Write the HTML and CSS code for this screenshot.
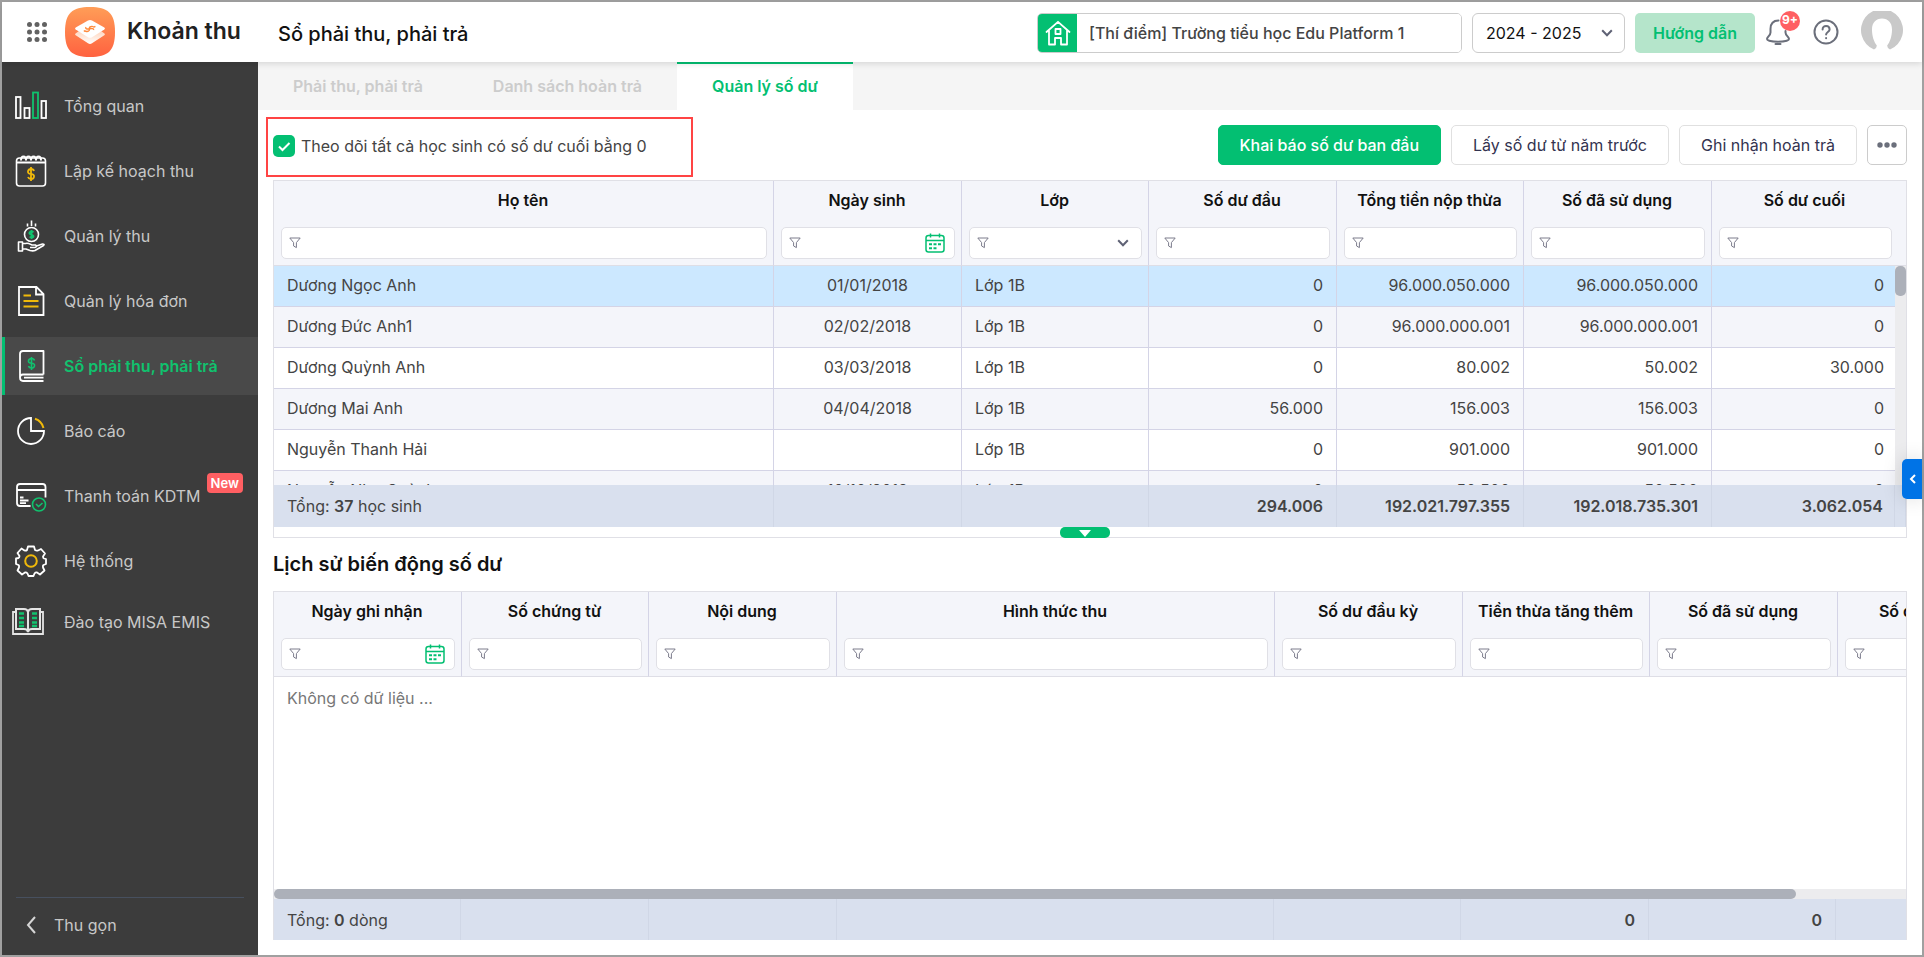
FILE: index.html
```html
<!DOCTYPE html>
<html lang="vi">
<head>
    <meta charset="UTF-8">
    <meta name="viewport" content="width=device-width, initial-scale=1.0">
    <title>Khoản thu - Sổ phải thu, phải trả</title>
    <link rel="stylesheet" href="styles.css">
</head>
<body>

<!-- Shared icons -->
<svg class="icon-defs" width="0" height="0" aria-hidden="true">
    <symbol id="icon-filter" viewBox="0 0 12 12">
        <path d="M.8 1h10.4L7.4 5.6v5L4.6 9V5.6z" fill="none" stroke="#7c7c8c" stroke-linejoin="round"/>
    </symbol>
    <symbol id="icon-calendar" viewBox="0 0 20 20">
        <g fill="none" stroke="#03bf72" stroke-width="1.5">
            <rect x="1" y="2.5" width="18" height="16.5" rx="2.5"/>
            <path d="M1 7.5h18M5.5 .5v4M14.5 .5v4"/>
            <path d="M4 11.2h3M8.5 11.2h3M13 11.2h3M4 15.2h3M8.5 15.2h3" stroke-width="2"/>
        </g>
    </symbol>
    <symbol id="icon-down" viewBox="0 0 12 8">
        <path d="M1.2 1.2 6 6.2l4.8-5" fill="none" stroke="#5f6275" stroke-width="2"/>
    </symbol>
</svg>

<div class="page">
    <!-- Header -->
    <header class="header">
        <div class="brand">
            <button class="icon-button apps" aria-label="Ứng dụng">
                <svg width="20" height="20" viewBox="0 0 20 20" fill="#626262">
                    <circle cx="2.5" cy="2.5" r="2.5"/><circle cx="10" cy="2.5" r="2.5"/><circle cx="17.5" cy="2.5" r="2.5"/>
                    <circle cx="2.5" cy="10" r="2.5"/><circle cx="10" cy="10" r="2.5"/><circle cx="17.5" cy="10" r="2.5"/>
                    <circle cx="2.5" cy="17.5" r="2.5"/><circle cx="10" cy="17.5" r="2.5"/><circle cx="17.5" cy="17.5" r="2.5"/>
                </svg>
            </button>
            <svg class="logo" width="50" height="50" viewBox="0 0 50 50">
                <defs>
                    <linearGradient id="logo-bg" x1="0" y1="0" x2="0" y2="1">
                        <stop offset="0" stop-color="#ff9d57"/><stop offset="1" stop-color="#ff6240"/>
                    </linearGradient>
                    <linearGradient id="logo-base" x1="0" y1="0" x2="0" y2="1">
                        <stop offset="0" stop-color="#ffd5bd"/><stop offset="1" stop-color="#fff"/>
                    </linearGradient>
                </defs>
                <path d="M25 0C43 0 50 6 50 25S43 50 25 50 0 44 0 25 7 0 25 0z" fill="url(#logo-bg)"/>
                <path d="M10.500 26.500 14 24l11 5 11-5 3.500 2.500q1 1-.2 1.800L27 36.300q-2 1.200-4 0L10.700 28.300q-1.200-.8-.2-1.800z" fill="url(#logo-base)"/>
                <path d="M23 13.600q2-1 4 0l12.300 7q1.400 1 0 2L27 30.200q-2 1.200-4 0L10.700 22.600q-1.400-1 0-2z" fill="#fff"/>
                <path d="M20 23.800c1 1.300 3.300.8 4.200-.5.700-1.200-.4-2.200.6-3.200 1.200-1 3.600-1 4.200.4M21 20.200c-.8 1.500 1 2.200 3.300 1.600 2.600-.7 4.800-.3 4.200 1.200M18.800 24.400l1.400-.7M29 20.200l1.400-.8" fill="none" stroke="#ff8a3c" stroke-width="1.400"/>
            </svg>
            <span class="app-name">Khoản thu</span>
        </div>
        <h1>Sổ phải thu, phải trả</h1>

        <div class="school">
            <span class="school-icon">
                <svg width="26" height="26" viewBox="0 0 26 26" fill="none" stroke="#fff" stroke-width="1.800" stroke-linejoin="round" stroke-linecap="round">
                    <path d="M1.500 12 13 1.800 24.500 12M4 10.500V24.500h6V18h6v6.500h6V10.500"/>
                    <rect x="10.500" y="9" width="5" height="5"/>
                </svg>
            </span>
            <input type="text" aria-label="Trường" value="[Thí điểm] Trường tiểu học Edu Platform 1">
        </div>
        <div class="year">
            <select aria-label="Năm học"><option>2024 - 2025</option></select>
            <svg width="12" height="8"><use href="#icon-down"/></svg>
        </div>
        <button class="guide">Hướng dẫn</button>
        <button class="icon-button bell" aria-label="Thông báo">
            <svg width="24" height="28" viewBox="0 0 24 28" fill="none" stroke="#6b6f7b" stroke-width="2" stroke-linecap="round" stroke-linejoin="round">
                <path d="M12.500 2.500C7 2.500 4.500 6 4.500 11v3.500c0 3-3.500 4.500-3.500 6.500 0 3.500 22 3.500 22 0 0-2-3.500-3.500-3.500-6.500V13"/>
                <path d="M9.500 26h5"/>
            </svg>
            <span class="count">9+</span>
        </button>
        <button class="icon-button help" aria-label="Trợ giúp">
            <svg width="26" height="26" viewBox="0 0 26 26" fill="none" stroke="#6b6f7b" stroke-width="2" stroke-linecap="round">
                <circle cx="13" cy="13" r="11.500"/>
                <path d="M9.600 10.400c0-4.600 7-4.400 7 0 0 2.600-3.500 2.600-3.500 5.200M13.100 19v.3"/>
            </svg>
        </button>
        <button class="icon-button" aria-label="Tài khoản">
            <svg width="42" height="42" viewBox="0 0 42 42">
                <path d="M13 38.500A21 21 0 1 1 29 38.500Q26 37 26.200 34.500C29 31 31 25 31 18.500 31 11.500 27 7.500 21 7.500S11 11.500 11 18.500c0 6.500 2 12.500 4.800 16Q16 37 13 38.500z" fill="#c9c9c9"/>
            </svg>
        </button>
    </header>

    <div class="layout">
        <!-- Sidebar -->
        <nav class="sidebar">
            <ul class="menu">
                <li><a href="#">
                    <svg width="32" height="32" viewBox="0 0 32 32" fill="none" stroke="#fff" stroke-width="1.800">
                        <rect x="1" y="7" width="4.500" height="21"/><rect x="9.500" y="18" width="5" height="10"/>
                        <rect x="18" y="2.500" width="5" height="25.500" stroke="#10c26e"/><rect x="26.500" y="11" width="4.500" height="17"/>
                    </svg>
                    <span>Tổng quan</span></a></li>
                <li><a href="#">
                    <svg width="32" height="32" viewBox="0 0 32 32" fill="none" stroke="#fff" stroke-width="1.600">
                        <rect x="1.500" y="3" width="29" height="28" rx="3"/>
                        <path d="M1.500 7.500h29" stroke-width="2"/>
                        <path d="M6 5.500q0-4 2.500-4T11 5.500q0-4 2.500-4t2.500 4q0-4 2.500-4t2.500 4q0-4 2.500-4t2.500 4" stroke-width="2"/>
                        <path d="M19 16q-.5-2-3-2t-3 2.300 3 2.700 3 2.800-3 2.200-3-2M16 12v14" stroke="#f0b90a" stroke-width="1.800"/>
                    </svg>
                    <span>Lập kế hoạch thu</span></a></li>
                <li><a href="#">
                    <svg width="32" height="32" viewBox="0 0 32 32" fill="none" stroke="#fff" stroke-width="1.600" stroke-linejoin="round">
                        <circle cx="16.500" cy="14.500" r="7"/>
                        <path d="M12.500 3.500v3M16.500 .5v5.500M20.500 3.500v3M3.500 22h4v9h-4zM7.500 23.500h3c3-1 5 1 6.500 1.500h3.500q2 1.500-.5 2.500h-5M21.500 26l6-2q2.500 0 1 1.500L20 30.500q-2 .8-5 0L11 29H7.500"/>
                        <path d="M18.500 12.300q-2-1.600-3.500-.3t.5 2.300q3 .6 3 2.200t-4 .5M16.500 10v9" stroke="#10c26e" stroke-width="1.800"/>
                    </svg>
                    <span>Quản lý thu</span></a></li>
                <li><a href="#">
                    <svg width="32" height="32" viewBox="0 0 32 32" fill="none" stroke="#fff" stroke-width="1.800">
                        <path d="M4 2h17.500L28.500 9v21H4zM21 2v7.500h7.500"/>
                        <path d="M8.500 10.500h7.500M8.500 16h15M8.500 21.500h15" stroke="#f0b90a" stroke-width="2"/>
                    </svg>
                    <span>Quản lý hóa đơn</span></a></li>
                <li><a href="#" class="active">
                    <svg width="32" height="32" viewBox="0 0 32 32" fill="none" stroke="#fff" stroke-width="1.800" stroke-linejoin="round">
                        <path d="M28.500 24.500V1H8Q5 1 5 4v23.500Q5 31 8 31h20.500M28.500 24.500H8q-3 0-3 3M9 27.700h19.500"/>
                        <path d="M19.500 10.500q-.5-2-3-2t-3 2.200 3 2.500 3 2.600-3 2.200-3-2M16.500 7v13" stroke="#10c26e" stroke-width="1.600"/>
                    </svg>
                    <span>Sổ phải thu, phải trả</span></a></li>
                <li><a href="#">
                    <svg width="32" height="32" viewBox="0 0 32 32" fill="none" stroke="#fff" stroke-width="1.800">
                        <path d="M16 3A13 13 0 1 0 29 16H16z"/>
                        <path d="M20 3.800A13 13 0 0 1 28.500 13" stroke="#f0b90a" stroke-width="2"/>
                    </svg>
                    <span>Báo cáo</span></a></li>
                <li><a href="#">
                    <svg width="32" height="32" viewBox="0 0 32 32" fill="none" stroke="#fff" stroke-width="1.800">
                        <path d="M15.500 26H5q-3 0-3-3V7q0-3 3-3h22.500q3 0 3 3v10.500M2 10h28.500M5 17.500h3.500M5 20.500h8.500M5 23.200h6"/>
                        <g stroke="#10c26e" stroke-width="1.600"><circle cx="24" cy="24.500" r="6.500"/><path d="m21 24 2.500 2.500 4-3.500"/></g>
                    </svg>
                    <span>Thanh toán KDTM</span>
                    <span class="new">New</span></a></li>
                <li><a href="#">
                    <svg width="32" height="32" viewBox="0 0 32 32" fill="none" stroke="#fff" stroke-width="1.800" stroke-linejoin="round">
                        <path d="M13 1.500h6l1 3.500q1.500 1 3 .5l3-1.500 4 4.500-2 3q0 1.500 1 2l2 .5v5l-2.500 1q-1 1-.5 2.500l1.500 3-4.500 4-3-2q-1.500-.3-2.500 1l-1 2.500h-5l-1-2.500q-1-1.300-2.500-1l-3 2-4.500-4L4 22.500Q4.500 21 3.500 20L1 19v-5.500l2.500-.5q1-.5 1-2L2.500 8l4-4.500L9.500 5.500q1.500.5 2.500-.5z"/>
                        <circle cx="16" cy="16" r="5.800" stroke="#f0b90a" stroke-width="2"/>
                    </svg>
                    <span>Hệ thống</span></a></li>
                <li><a href="#" class="training">
                    <svg width="32" height="32" viewBox="0 0 32 32" fill="none" stroke="#e4e4e4" stroke-width="2">
                        <path d="M4 3h8q3.500 0 4 3 .5-3 4-3h8v20h-8q-3.500 0-4 3-.5-3-4-3H4zM16 6v20"/>
                        <path d="M4 6H1v22h30V6h-3" stroke-width="1.800"/>
                        <path d="M7 7.500h5M7 12h5M7 16.500h5M7 20h5M20 7.500h5M20 12h5M20 16.500h5M20 20h5" stroke="#10c26e" stroke-width="2.400"/>
                    </svg>
                    <span>Đào tạo MISA EMIS</span></a></li>
            </ul>
            <button class="collapse">
                <svg width="10" height="18" viewBox="0 0 10 18"><path d="M9 1 2 9l7 8" fill="none" stroke="#d6d6d6" stroke-width="2"/></svg>
                Thu gọn
            </button>
        </nav>

        <main class="main">
            <div class="tabs">
                <a href="#">Phải thu, phải trả</a>
                <a href="#">Danh sách hoàn trả</a>
                <a href="#" class="active">Quản lý số dư</a>
            </div>

            <div class="content">
                <div class="toolbar">
                    <label class="follow">
                        <input type="checkbox" checked>
                        Theo dõi tất cả học sinh có số dư cuối bằng 0
                    </label>
                    <div class="actions">
                        <button class="button primary">Khai báo số dư ban đầu</button>
                        <button class="button">Lấy số dư từ năm trước</button>
                        <button class="button">Ghi nhận hoàn trả</button>
                        <button class="button more" aria-label="Thêm">
                            <svg width="20" height="6" viewBox="0 0 20 6" fill="#6b6f7b"><circle cx="3" cy="3" r="2.700"/><circle cx="10" cy="3" r="2.700"/><circle cx="17" cy="3" r="2.700"/></svg>
                        </button>
                    </div>
                </div>

                <!-- Student balances -->
                <section class="grid">
                    <div class="grid-scroll">
                        <table>
                            <colgroup>
                                <col><col class="col-m"><col class="col-s"><col class="col-m"><col class="col-s"><col class="col-m"><col class="col-last"><col class="col-scroll">
                            </colgroup>
                            <thead>
                                <tr>
                                    <th>Họ tên<div class="filter"><svg><use href="#icon-filter"/></svg><input type="text" aria-label="Lọc họ tên"></div></th>
                                    <th>Ngày sinh<div class="filter"><svg><use href="#icon-filter"/></svg><input type="text" aria-label="Lọc ngày sinh"><svg class="calendar"><use href="#icon-calendar"/></svg></div></th>
                                    <th>Lớp<div class="filter"><svg><use href="#icon-filter"/></svg><select aria-label="Lọc lớp"><option></option></select><svg class="arrow"><use href="#icon-down"/></svg></div></th>
                                    <th>Số dư đầu<div class="filter"><svg><use href="#icon-filter"/></svg><input type="text" aria-label="Lọc số dư đầu"></div></th>
                                    <th>Tổng tiền nộp thừa<div class="filter"><svg><use href="#icon-filter"/></svg><input type="text" aria-label="Lọc tổng tiền nộp thừa"></div></th>
                                    <th>Số đã sử dụng<div class="filter"><svg><use href="#icon-filter"/></svg><input type="text" aria-label="Lọc số đã sử dụng"></div></th>
                                    <th class="last">Số dư cuối<div class="filter"><svg><use href="#icon-filter"/></svg><input type="text" aria-label="Lọc số dư cuối"></div></th>
                                    <td></td>
                                </tr>
                            </thead>
                            <tbody>
                                <tr class="selected"><td>Dương Ngọc Anh</td><td class="center">01/01/2018</td><td>Lớp 1B</td><td class="number">0</td><td class="number">96.000.050.000</td><td class="number">96.000.050.000</td><td class="number last">0</td><td class="track" rowspan="6"><div class="thumb"></div></td></tr>
                                <tr><td>Dương Đức Anh1</td><td class="center">02/02/2018</td><td>Lớp 1B</td><td class="number">0</td><td class="number">96.000.000.001</td><td class="number">96.000.000.001</td><td class="number last">0</td></tr>
                                <tr><td>Dương Quỳnh Anh</td><td class="center">03/03/2018</td><td>Lớp 1B</td><td class="number">0</td><td class="number">80.002</td><td class="number">50.002</td><td class="number last">30.000</td></tr>
                                <tr><td>Dương Mai Anh</td><td class="center">04/04/2018</td><td>Lớp 1B</td><td class="number">56.000</td><td class="number">156.003</td><td class="number">156.003</td><td class="number last">0</td></tr>
                                <tr><td>Nguyễn Thanh Hải</td><td class="center"></td><td>Lớp 1B</td><td class="number">0</td><td class="number">901.000</td><td class="number">901.000</td><td class="number last">0</td></tr>
                                <tr><td>Nguyễn Như Quỳnh</td><td class="center">10/10/2018</td><td>Lớp 1B</td><td class="number">0</td><td class="number">50.500</td><td class="number">50.500</td><td class="number last">0</td></tr>
                            </tbody>
                            <tfoot>
                                <tr><td>Tổng: <b>37</b> học sinh</td><td></td><td></td><td class="number">294.006</td><td class="number">192.021.797.355</td><td class="number">192.018.735.301</td><td class="number last">3.062.054</td><td></td></tr>
                            </tfoot>
                        </table>
                    </div>
                    <div class="splitter">
                        <button aria-label="Thu nhỏ"><svg width="12" height="7" viewBox="0 0 12 7"><path d="M0 0h12L6 7z" fill="#fff"/></svg></button>
                    </div>
                </section>

                <!-- Balance history -->
                <h2>Lịch sử biến động số dư</h2>
                <section class="grid history">
                    <div class="grid-scroll">
                        <table>
                            <colgroup>
                                <col class="col-m"><col class="col-s"><col class="col-m"><col><col class="col-m"><col class="col-s"><col class="col-m"><col class="col-m">
                            </colgroup>
                            <thead>
                                <tr>
                                    <th>Ngày ghi nhận<div class="filter"><svg><use href="#icon-filter"/></svg><input type="text" aria-label="Lọc ngày ghi nhận"><svg class="calendar"><use href="#icon-calendar"/></svg></div></th>
                                    <th>Số chứng từ<div class="filter"><svg><use href="#icon-filter"/></svg><input type="text" aria-label="Lọc số chứng từ"></div></th>
                                    <th>Nội dung<div class="filter"><svg><use href="#icon-filter"/></svg><input type="text" aria-label="Lọc nội dung"></div></th>
                                    <th>Hình thức thu<div class="filter"><svg><use href="#icon-filter"/></svg><input type="text" aria-label="Lọc hình thức thu"></div></th>
                                    <th>Số dư đầu kỳ<div class="filter"><svg><use href="#icon-filter"/></svg><input type="text" aria-label="Lọc số dư đầu kỳ"></div></th>
                                    <th>Tiền thừa tăng thêm<div class="filter"><svg><use href="#icon-filter"/></svg><input type="text" aria-label="Lọc tiền thừa tăng thêm"></div></th>
                                    <th>Số đã sử dụng<div class="filter"><svg><use href="#icon-filter"/></svg><input type="text" aria-label="Lọc số đã sử dụng"></div></th>
                                    <th>Số dư cuối kỳ<div class="filter"><svg><use href="#icon-filter"/></svg><input type="text" aria-label="Lọc số dư cuối kỳ"></div></th>
                                </tr>
                            </thead>
                            <tbody>
                                <tr><td class="empty" colspan="8">Không có dữ liệu ...</td></tr>
                            </tbody>
                        </table>
                    </div>
                    <div class="h-track"><div class="h-thumb"></div></div>
                    <div class="grid-total">
                        <table>
                            <colgroup>
                                <col class="col-s"><col class="col-m"><col class="col-m"><col><col class="col-s"><col class="col-m"><col class="col-s"><col class="col-m">
                            </colgroup>
                            <tfoot>
                                <tr><td>Tổng: <b>0</b> dòng</td><td></td><td></td><td></td><td></td><td class="number">0</td><td class="number">0</td><td></td></tr>
                            </tfoot>
                        </table>
                    </div>
                </section>
            </div>
        </main>
    </div>

    <button class="side-toggle" aria-label="Mở rộng">
        <svg width="7" height="10" viewBox="0 0 7 10"><path d="M6 1 2 5l4 4" fill="none" stroke="#fff" stroke-width="2"/></svg>
    </button>
</div>

</body>
</html>
```

FILE: styles.css
```css
* {
    box-sizing: border-box;
}
body {
    margin: 0;
    font-family: Inter, "Noto Sans", sans-serif;
    font-size: 16px;
    line-height: 24px;
    color: #444;
}
button, input, select {
    font: inherit;
    color: inherit;
}
button {
    cursor: pointer;
}
svg {
    display: block;
    flex-shrink: 0;
}
.icon-defs {
    position: absolute;
}
.page {
    position: relative;
    display: flex;
    flex-direction: column;
    min-height: 100vh;
    border: 2px solid #a0a0a0;
    background-color: #fff;
}

/* Header */
.header {
    display: flex;
    align-items: center;
    height: 60px;
    padding-right: 19px;
    background-color: #fff;
    box-shadow: 0 2px 6px rgba(0, 0, 0, 0.12);
    z-index: 5;
}
.brand {
    display: flex;
    align-items: center;
    width: 256px;
    padding-left: 25px;
}
.icon-button {
    padding: 0;
    border: none;
    background: none;
}
.logo {
    margin: 0 12px 0 18px;
}
.app-name {
    padding-bottom: 2px;
    font-size: 23px;
    font-weight: 600;
    color: #212121;
}
h1 {
    flex: 1;
    margin: 0;
    padding: 4px 0 0 20px;
    font-size: 20px;
    font-weight: 500;
    color: #111;
}
.school, .year, .guide {
    margin-top: 2px;
}
.school {
    display: flex;
    width: 425px;
    height: 40px;
    margin-right: 10px;
    border: 1px solid #ccc;
    border-radius: 5px;
    overflow: hidden;
}
.school-icon {
    display: flex;
    align-items: center;
    justify-content: center;
    width: 39px;
    background-color: #03bf72;
}
.school input {
    flex: 1;
    padding: 0 12px;
    border: none;
    outline: none;
    font-weight: 500;
}
.year {
    position: relative;
    width: 153px;
    margin-right: 10px;
}
.year select {
    width: 100%;
    height: 40px;
    padding: 0 13px;
    border: 1px solid #ccc;
    border-radius: 6px;
    background: none;
    appearance: none;
    color: #111;
}
.year svg {
    position: absolute;
    top: 16px;
    right: 12px;
}
.guide {
    width: 120px;
    height: 40px;
    margin-right: 11px;
    border: none;
    border-radius: 5px;
    background-color: #b5e5cb;
    color: #03bf72;
    font-weight: 600;
}
.bell {
    position: relative;
    margin-right: 23px;
}
.count {
    position: absolute;
    top: -7px;
    left: 14px;
    width: 20px;
    height: 20px;
    border-radius: 10px;
    background-color: #ff5f62;
    color: #fff;
    font-size: 12px;
    font-weight: 700;
    line-height: 18px;
}
.help {
    margin-right: 22px;
}

/* Sidebar */
.layout {
    display: flex;
    flex: 1;
}
.sidebar {
    display: flex;
    flex-direction: column;
    justify-content: space-between;
    width: 256px;
    flex-shrink: 0;
    padding-top: 15px;
    background-color: #3c3c3c;
    color: #c8c8c8;
}
.menu {
    display: flex;
    flex-direction: column;
    gap: 7px;
    margin: 0;
    padding: 0;
    list-style: none;
}
.menu a {
    display: flex;
    align-items: center;
    gap: 17px;
    height: 58px;
    padding-left: 10px;
    border-left: 3px solid transparent;
    color: inherit;
    text-decoration: none;
}
.menu a.active {
    border-left-color: #03bf72;
    background-color: #494949;
    color: #10c26e;
    font-weight: 600;
}
.menu a.training {
    gap: 20px;
    height: 50px;
    padding-left: 7px;
}
.new {
    align-self: flex-start;
    margin: 6px 0 0 -11px;
    padding: 0 4px;
    border-radius: 4px;
    background-color: #ff5f62;
    color: #fff;
    font-size: 13px;
    font-weight: 600;
    line-height: 20px;
}
.collapse {
    display: flex;
    align-items: center;
    gap: 18px;
    height: 58px;
    margin: 0 14px;
    padding: 0 10px 4px;
    border: none;
    border-top: 1px solid #47505f;
    background: none;
}

/* Tabs */
.main {
    display: flex;
    flex-direction: column;
    flex: 1;
    min-width: 0;
}
.tabs {
    display: flex;
    height: 48px;
    background-color: #f5f5f5;
}
.tabs a {
    padding: 10px 35px 0;
    border-top: 2px solid transparent;
    color: #ccc;
    font-weight: 600;
    text-decoration: none;
}
.tabs a.active {
    border-top-color: #03bf72;
    background-color: #fff;
    color: #03bf72;
}

/* Toolbar */
.content {
    display: flex;
    flex-direction: column;
    flex: 1;
    padding: 7px 15px 15px 8px;
}
.toolbar {
    display: flex;
    align-items: flex-start;
    justify-content: space-between;
    margin-bottom: 3px;
}
.follow {
    display: flex;
    align-items: center;
    gap: 6px;
    width: 427px;
    height: 60px;
    padding: 0 5px 3px;
    border: 2px solid #f44;
}
.follow input {
    width: 22px;
    height: 22px;
    margin: 0;
    appearance: none;
    border-radius: 5px;
    background: #03bf72 url("data:image/svg+xml,%3Csvg xmlns='http://www.w3.org/2000/svg' viewBox='0 0 22 22'%3E%3Cpath d='M6 11.500l3.500 3.500 7-7' fill='none' stroke='%23fff' stroke-width='2'/%3E%3C/svg%3E");
}
.actions {
    display: flex;
    gap: 10px;
    padding-top: 8px;
}
.button {
    height: 40px;
    padding: 0 21px;
    border: 1px solid #e0e0e0;
    border-radius: 5px;
    background-color: #fff;
    color: #333350;
}
.button.primary {
    border-color: #03bf72;
    background-color: #03bf72;
    color: #fff;
    font-weight: 500;
}
.button.more {
    width: 40px;
    padding: 0 9px;
    border-color: #ccc;
}

/* Grids */
.grid {
    margin-left: 7px;
    border: 1px solid #e0e0e6;
}
.grid-scroll {
    max-height: 346px;
    overflow: hidden;
}
table {
    width: 100%;
    table-layout: fixed;
    border-collapse: separate;
    border-spacing: 0;
}
.col-s {
    width: 187px;
}
.col-m {
    width: 188px;
}
.col-last {
    width: 183px;
}
.col-scroll {
    width: 11px;
}
thead th, thead td {
    height: 85px;
    padding: 6px 6px 6px 5px;
    border-right: 1px solid #d4d4e6;
    border-bottom: 1px solid #dedee6;
    background-color: #f4f5fa;
    color: #111;
    font-weight: 600;
    white-space: nowrap;
}
thead .last, thead td {
    border-right: none;
}
thead .last {
    padding-right: 3px;
}
.filter {
    display: flex;
    align-items: center;
    height: 32px;
    margin: 15px 0 0 2px;
    padding: 0 9px 0 7px;
    border: 1px solid #e0e0e6;
    border-radius: 5px;
    background-color: #fff;
}
.filter svg {
    width: 12px;
    height: 12px;
}
.filter .calendar {
    width: 20px;
    height: 20px;
}
.filter .arrow {
    height: 8px;
    margin-right: 3px;
}
.filter input, .filter select {
    flex: 1;
    min-width: 0;
    height: 28px;
    border: none;
    outline: none;
    background: none;
    appearance: none;
}
tbody td {
    height: 41px;
    padding: 0 13px 2px;
    border-right: 1px solid #d4d4e6;
    border-bottom: 1px solid #d4d4e6;
}
tbody td.last {
    padding-right: 11px;
    border-right: none;
}
tbody tr:nth-child(even) {
    background-color: #f4f5fa;
}
tbody tr.selected {
    background-color: #cce8ff;
}
.center {
    text-align: center;
}
.number {
    text-align: right;
}
tbody td.track {
    padding: 0;
    border: none;
    background-color: #ececee;
    vertical-align: top;
}
.thumb {
    height: 30px;
    border-radius: 5px;
    background-color: #acb0b9;
}
tfoot td {
    position: sticky;
    bottom: 0;
    height: 42px;
    padding: 0 13px;
    border-right: 1px solid #d0d7e6;
    background-color: #d9e0ee;
}
tfoot td.last {
    padding-right: 11px;
}
tfoot b, tfoot .number {
    font-weight: 600;
}
.splitter {
    display: flex;
    justify-content: center;
    height: 10px;
    padding-right: 10px;
}
.splitter button {
    display: flex;
    justify-content: center;
    width: 50px;
    height: 11px;
    padding: 3px 0 0;
    border: none;
    border-radius: 5px;
    background-color: #03bf72;
}
h2 {
    margin: 14px 0 15px 7px;
    font-size: 20px;
    font-weight: 600;
    line-height: 24px;
    color: #111;
}

/* History grid scrolls sideways */
.history {
    display: flex;
    flex-direction: column;
    flex: 1;
    border-bottom: none;
}
.history .grid-scroll {
    flex: 1;
}
.history table {
    width: 1752px;
}
tbody td.empty {
    height: 44px;
    border: none;
    color: #777;
}
.h-track {
    height: 10px;
    background-color: #ececee;
}
.h-thumb {
    width: calc(100% - 110px);
    height: 10px;
    border-radius: 5px;
    background-color: #acb0b9;
}
.grid-total {
    overflow: hidden;
}
.grid-total table {
    width: 1750px;
}
.grid-total td {
    height: 41px;
}

.side-toggle {
    position: absolute;
    top: 457px;
    right: 0;
    display: flex;
    align-items: center;
    justify-content: center;
    width: 20px;
    height: 40px;
    padding: 0;
    border: none;
    border-radius: 5px 0 0 5px;
    background-color: #0073e6;
    box-shadow: 0 0 20px rgba(0, 0, 0, 0.15);
}
```
